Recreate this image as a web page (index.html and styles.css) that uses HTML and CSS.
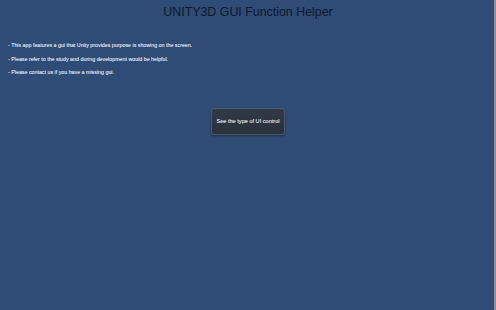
FILE: index.html
```html
<!DOCTYPE html>
<html lang="en">
<head>
    <meta charset="UTF-8">
    <title>UNITY3D GUI Function Helper</title>
    <link rel="stylesheet" href="styles.css">
</head>
<body>
<div class="screen">
    <h1>UNITY3D GUI Function Helper</h1>
    <ul class="notes">
        <li>- This app features a gui that Unity provides purpose is showing on the screen.</li>
        <li>- Please refer to the study and during development would be helpful.</li>
        <li>- Please contact us if you have a missing gui.</li>
    </ul>
    <div class="actions">
        <button class="ui-button">See the type of UI control</button>
    </div>
</div>
<div class="edge"></div>
</body>
</html>
```

FILE: styles.css
```css
* {
    box-sizing: border-box;
    margin: 0;
    padding: 0;
}

html, body {
    height: 100%;
}

body {
    display: flex;
    font-family: "Liberation Sans", Arial, sans-serif;
    background-color: #2f4c77;
}

.screen {
    flex: 1;
    padding: 4px 0 0 8px;
}

.edge {
    width: 2px;
    background-color: #8c9098;
}

h1 {
    font-size: 12.4px;
    font-weight: normal;
    text-align: center;
    color: #101827;
    line-height: 16px;
    margin-bottom: 22px;
    padding-right: 6px;
}

.notes {
    list-style: none;
    font-size: 5.3px;
    color: #d3d9e2;
    text-shadow: 0 0 0.3px #d3d9e2;
}

.notes li {
    line-height: 7px;
    margin-bottom: 6.5px;
}

.actions {
    display: flex;
    justify-content: center;
    padding-top: 25px;
    padding-right: 6px;
}

.ui-button {
    width: 74px;
    height: 27px;
    font-family: "Liberation Sans", Arial, sans-serif;
    font-size: 5.6px;
    color: #cdd2d9;
    text-shadow: 0 0 0.3px #cdd2d9;
    background: linear-gradient(#303946, #29313c);
    border: 1px solid #4f5868;
    border-radius: 3px;
    box-shadow: 0 1px 2px rgba(0, 0, 0, 0.4);
}
```
